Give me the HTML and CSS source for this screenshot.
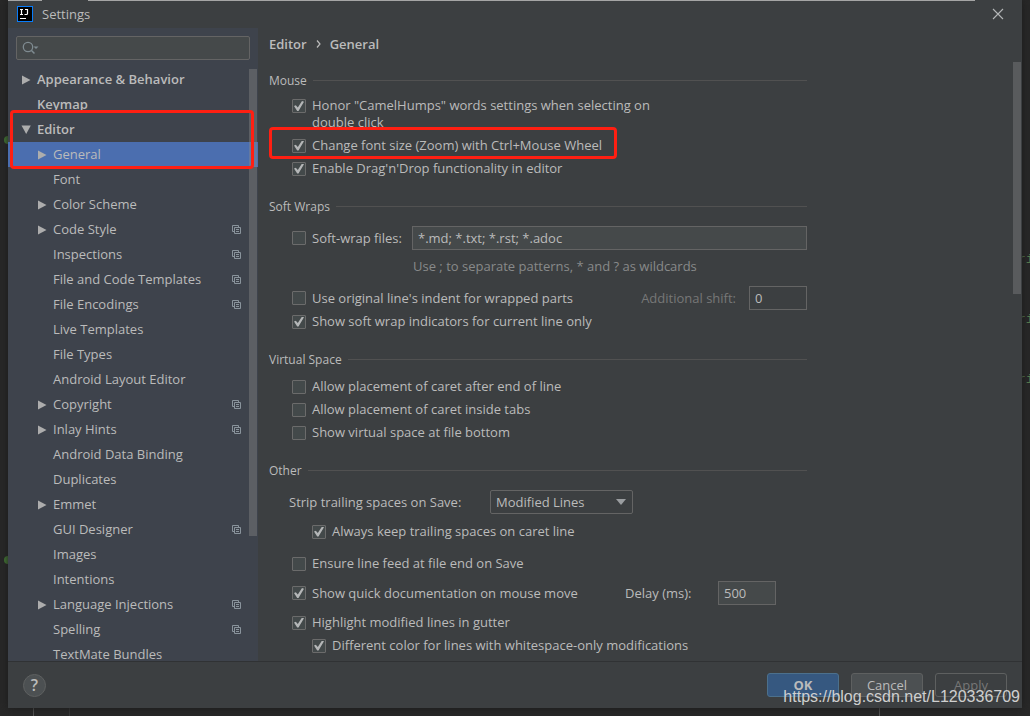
FILE: index.html
```html
<!DOCTYPE html>
<html lang="en">
<head>
<meta charset="utf-8">
<title>Settings</title>
<link rel="stylesheet" href="styles.css">
</head>
<body>
<svg width="0" height="0" class="sprite" aria-hidden="true">
  <symbol id="right" viewBox="0 0 10 10"><path d="M1 .5L9.500 5L1 9.500Z" fill="#adadad"/></symbol>
  <symbol id="down" viewBox="0 0 10 10"><path d="M.5 .5H9.800L5.200 9Z" fill="#adadad"/></symbol>
  <symbol id="copy" viewBox="0 0 9 9"><path d="M2 6.500H.5V.5H6.500V2M2.500 2.500H8.500V8.500H2.500ZM4 4.500H7M4 6.500H7" fill="none" stroke="#8a949c"/></symbol>
</svg>
<div class="editor" aria-hidden="true">
  <i class="topline a"></i><i class="topline b"></i>
  <i class="dot d1"></i><i class="dot d2"></i>
  <span class="code c1">ri</span><span class="code c2">ri</span><span class="code c3">ri</span>
  <i class="guide g1"></i><i class="guide g2"></i><i class="guide g3"></i>
</div>
<main class="dialog">
  <header class="titlebar">
    <svg class="logo" width="16" height="16" viewBox="0 0 16 16"><rect width="16" height="16" fill="#087cfa"/><rect x="1" y="1" width="14" height="14" fill="#000"/><path d="M3 3.500H6M4.500 3.500V8.500M3 8.500H6M8 3.500H10.500V7.500Q10.500 8.500 9.500 8.500H7.500" fill="none" stroke="#fff" stroke-width="1.200"/><path d="M3 12.500H9" stroke="#fff"/></svg>
    <h1>Settings</h1>
    <button class="close" aria-label="Close"><svg width="12" height="12" viewBox="0 0 12 12"><path d="M1 1L11 11M11 1L1 11" stroke="#b4b6b7" stroke-width="1.100"/></svg></button>
  </header>
  <div class="body">
    <aside class="sidebar">
      <div class="search">
        <svg width="18" height="14" viewBox="0 0 18 14"><circle cx="6" cy="6" r="4.700" fill="none" stroke="#7f8b91" stroke-width="1.300"/><path d="M9.500 9.500L12.500 12.500" stroke="#7f8b91" stroke-width="1.500"/><path d="M11.500 5.500H16.500L14 8Z" fill="#7f8b91"/></svg>
        <input type="text" aria-label="Search settings">
      </div>
      <nav class="tree">
        <a href="#" class="top"><svg><use href="#right"/></svg><span>Appearance &amp; Behavior</span></a>
        <a href="#" class="top leaf"><span>Keymap</span></a>
        <a href="#" class="top"><svg><use href="#down"/></svg><span>Editor</span></a>
        <a href="#" class="selected"><svg><use href="#right"/></svg><span>General</span></a>
        <a href="#" class="leaf"><span>Font</span></a>
        <a href="#"><svg><use href="#right"/></svg><span>Color Scheme</span></a>
        <a href="#"><svg><use href="#right"/></svg><span>Code Style</span><svg class="copy"><use href="#copy"/></svg></a>
        <a href="#" class="leaf"><span>Inspections</span><svg class="copy"><use href="#copy"/></svg></a>
        <a href="#" class="leaf"><span>File and Code Templates</span><svg class="copy"><use href="#copy"/></svg></a>
        <a href="#" class="leaf"><span>File Encodings</span><svg class="copy"><use href="#copy"/></svg></a>
        <a href="#" class="leaf"><span>Live Templates</span></a>
        <a href="#" class="leaf"><span>File Types</span></a>
        <a href="#" class="leaf"><span>Android Layout Editor</span></a>
        <a href="#"><svg><use href="#right"/></svg><span>Copyright</span><svg class="copy"><use href="#copy"/></svg></a>
        <a href="#"><svg><use href="#right"/></svg><span>Inlay Hints</span><svg class="copy"><use href="#copy"/></svg></a>
        <a href="#" class="leaf"><span>Android Data Binding</span></a>
        <a href="#" class="leaf"><span>Duplicates</span></a>
        <a href="#"><svg><use href="#right"/></svg><span>Emmet</span></a>
        <a href="#" class="leaf"><span>GUI Designer</span><svg class="copy"><use href="#copy"/></svg></a>
        <a href="#" class="leaf"><span>Images</span></a>
        <a href="#" class="leaf"><span>Intentions</span></a>
        <a href="#"><svg><use href="#right"/></svg><span>Language Injections</span><svg class="copy"><use href="#copy"/></svg></a>
        <a href="#" class="leaf"><span>Spelling</span><svg class="copy"><use href="#copy"/></svg></a>
        <a href="#" class="leaf"><span>TextMate Bundles</span></a>
      </nav>
      <i class="scroll tree-scroll"></i>
    </aside>
    <section class="content">
      <div class="crumbs"><span>Editor</span><svg width="5" height="8" viewBox="0 0 5 8"><path d="M1 .5L4 4L1 7.500" fill="none" stroke="#bbb" stroke-width="1.200"/></svg><span>General</span></div>
      <section class="group">
        <h2>Mouse</h2>
        <div class="row two"><label class="check"><input type="checkbox" checked><span>Honor "CamelHumps" words settings when selecting on double click</span></label></div>
        <div class="row"><label class="check"><input type="checkbox" checked><span>Change font size (Zoom) with Ctrl+Mouse Wheel</span></label></div>
        <div class="row"><label class="check"><input type="checkbox" checked><span>Enable Drag'n'Drop functionality in editor</span></label></div>
      </section>
      <section class="group">
        <h2>Soft Wraps</h2>
        <div class="row field first"><label class="check wrapfiles"><input type="checkbox"><span>Soft-wrap files:</span></label><input class="text patterns" type="text" value="*.md; *.txt; *.rst; *.adoc" aria-label="Soft-wrap file patterns"></div>
        <p class="hint">Use ; to separate patterns, * and ? as wildcards</p>
        <div class="row field"><label class="check"><input type="checkbox"><span>Use original line's indent for wrapped parts</span></label><label class="shift" for="shift">Additional shift:</label><input class="text small off" id="shift" type="text" value="0"></div>
        <div class="row"><label class="check"><input type="checkbox" checked><span>Show soft wrap indicators for current line only</span></label></div>
      </section>
      <section class="group">
        <h2>Virtual Space</h2>
        <div class="row"><label class="check"><input type="checkbox"><span>Allow placement of caret after end of line</span></label></div>
        <div class="row"><label class="check"><input type="checkbox"><span>Allow placement of caret inside tabs</span></label></div>
        <div class="row"><label class="check"><input type="checkbox"><span>Show virtual space at file bottom</span></label></div>
      </section>
      <section class="group">
        <h2>Other</h2>
        <div class="row field first strip"><label for="strip">Strip trailing spaces on Save:</label><span class="combo"><select id="strip"><option>Modified Lines</option></select><svg width="10" height="6" viewBox="0 0 10 6"><path d="M0 0H10L5 6Z" fill="#9a9da0"/></svg></span></div>
        <div class="row nested spaced"><label class="check"><input type="checkbox" checked><span>Always keep trailing spaces on caret line</span></label></div>
        <div class="row apart"><label class="check"><input type="checkbox"><span>Ensure line feed at file end on Save</span></label></div>
        <div class="row field spaced"><label class="check doc"><input type="checkbox" checked><span>Show quick documentation on mouse move</span></label><label class="delay" for="delay">Delay (ms):</label><input class="text small" id="delay" type="text" value="500"></div>
        <div class="row spaced"><label class="check"><input type="checkbox" checked><span>Highlight modified lines in gutter</span></label></div>
        <div class="row nested"><label class="check"><input type="checkbox" checked><span>Different color for lines with whitespace-only modifications</span></label></div>
      </section>
      <i class="scroll page-scroll"></i>
    </section>
  </div>
  <footer class="actions">
    <button class="help" aria-label="Help">?</button>
    <button class="btn primary">OK</button>
    <button class="btn">Cancel</button>
    <button class="btn disabled" disabled>Apply</button>
  </footer>
</main>
<div class="mark m1"></div>
<div class="mark m2"></div>
<div class="watermark">https://blog.csdn.net/L120336709</div>
</body>
</html>
```
FILE: styles.css
```css
* { box-sizing: border-box; }
body {
  margin: 0;
  height: 100vh;
  padding: 0 8px 8px;
  overflow: hidden;
  position: relative;
  background: #282828;
  color: #bbbbbb;
  font: 13px/17px "Open Sans", "Noto Sans", sans-serif;
}
button, input, select { font: inherit; color: inherit; margin: 0; }
h1, h2, p { margin: 0; font-size: inherit; font-weight: 400; }
.sprite { position: absolute; }

.dialog {
  position: relative;
  height: 100%;
  display: flex;
  flex-direction: column;
  background: #3c3f41;
  box-shadow: 0 0 8px #1b1b1b;
}
.titlebar { height: 28px; display: flex; align-items: center; padding: 0 18px 0 9px; flex: none; }
.titlebar h1 { flex: 1; margin-left: 9px; }
.close { border: 0; background: none; padding: 0; display: flex; }
.body { flex: 1; min-height: 0; display: flex; border-bottom: 1px solid #303234; }

.sidebar { position: relative; width: 250px; flex: none; background: #3e434c; overflow: hidden; padding-top: 8px; }
.search {
  display: flex; align-items: center; height: 24px; margin: 0 8px 7px; padding-left: 5px;
  border: 1px solid #646464; border-radius: 2px; background: #45494a;
}
.search input { flex: 1; min-width: 0; border: 0; background: none; outline: 0; }
.tree a { display: flex; align-items: center; height: 25px; padding: 0 17px 0 29px; color: inherit; text-decoration: none; white-space: nowrap; }
.tree a svg { width: 10px; height: 10px; flex: none; margin-right: 6px; }
.tree a.leaf { padding-left: 45px; }
.tree a.top { padding-left: 13px; font-weight: 600; }
.tree a.top.leaf { padding-left: 29px; }
.tree a.selected { background: #4b6eaf; }
.tree a svg.copy { width: 9px; height: 9px; margin: 0 0 0 auto; }
.scroll { position: absolute; width: 8px; background: #595b5d; }
.tree-scroll { top: 41px; right: 1px; height: 467px; background: #8a8a8a66; }
.page-scroll { top: 34px; right: 1px; height: 232px; }

.content { position: relative; flex: 1; min-width: 0; overflow: hidden; padding: 0 215px 0 11px; }
.crumbs { display: flex; align-items: center; gap: 9px; height: 32px; margin-bottom: 8px; font-weight: 600; }
.group { margin-bottom: 14px; }
h2 { display: flex; align-items: center; height: 24px; gap: 6px; margin-bottom: 4px; font-size: 12px; }
h2::after { content: ""; flex: 1; height: 1px; background: #515151; }
.row { display: flex; align-items: center; height: 23px; padding-left: 23px; white-space: nowrap; }
.row.two { height: 38px; padding-top: 1px; align-items: flex-start; }
.row.two span { white-space: normal; width: 340px; }
.row.two .check { align-items: flex-start; }
.row.two input { margin-top: 2px; }
.row.field { height: 24px; }
.row.first { margin-top: 8px; }
.row.strip { padding-left: 20px; }
.row.strip label { width: 201px; }
.row.nested { padding-left: 43px; }
.row.spaced { margin-top: 6px; }
.row.apart { margin-top: 9px; }
.check { display: flex; align-items: center; gap: 6px; }
.check input {
  appearance: none; flex: none; width: 14px; height: 14px; border: 1px solid #6b6b6b; border-radius: 1px; background: #43494a;
}
.check input:checked::after {
  content: ""; display: block; width: 10px; height: 10px; margin: 1px; background: #b4b6b7;
  clip-path: polygon(0 50%, 18% 42%, 38% 66%, 80% 0, 100% 8%, 45% 100%, 32% 100%);
}
.check.wrapfiles { width: 120px; }
.text { height: 24px; border: 1px solid #646464; background: #45494a; padding: 0 5px; outline: 0; }
.text.patterns { flex: 1; min-width: 0; }
.text.small { width: 58px; flex: none; }
.text.off { background: #3c3f41; }
.hint { margin: 4px 0 8px 144px; line-height: 24px; color: #888a8a; }
.shift { margin-left: auto; margin-right: 13px; color: #777777; }
.check.doc { width: 333px; }
.delay { width: 93px; }
.combo { display: flex; align-items: center; position: relative; width: 143px; }
.combo select { appearance: none; width: 100%; height: 24px; padding: 0 5px; border: 1px solid #646464; border-radius: 2px; background: #3c3f41; outline: 0; }
.combo svg { position: absolute; right: 7px; pointer-events: none; }

.actions { display: flex; align-items: center; height: 46px; flex: none; gap: 12px; padding: 0 15px; }
.help { width: 23px; height: 23px; margin-right: auto; padding: 0; border: 1px solid #5e6060; border-radius: 50%; background: #4c5052; font-size: 16px; font-weight: 600; }
.btn { width: 72px; height: 24px; padding: 0; border: 1px solid #5e6060; border-radius: 3px; background: #4c5052; }
.btn.primary { background: #365880; border-color: #4c708c; font-weight: 700; }
.btn.disabled { background: none; color: #777777; }

.mark { position: absolute; border: 3px solid #ff1f12; border-radius: 4px; }
.m1 { left: 10px; top: 110px; width: 244px; height: 59px; }
.m2 { left: 269px; top: 127px; width: 348px; height: 32px; }
.watermark { position: absolute; right: 10px; bottom: 9px; font: 16px/20px "Liberation Sans", sans-serif; color: #cfcfcf; }

.editor i, .code { position: absolute; }
.topline { top: 0; height: 1px; background: #a5a5a5; z-index: 1; }
.topline.a { left: 8px; width: 34px; }
.topline.b { left: 88px; right: 55px; }
.dot { left: 4px; width: 8px; height: 8px; border-radius: 50%; background: #467a36; }
.d1 { top: 136px; }
.d2 { top: 556px; }
.code { left: 1018px; font: 13px/16px "Liberation Mono", monospace; color: #587d50; }
.c1 { top: 252px; }
.c2 { top: 312px; }
.c3 { top: 372px; }
.guide { bottom: 0; width: 1px; height: 8px; background: #555555; }
.g1 { left: 33px; }
.g2 { left: 69px; background: #383838; }
.g3 { left: 879px; }
```
